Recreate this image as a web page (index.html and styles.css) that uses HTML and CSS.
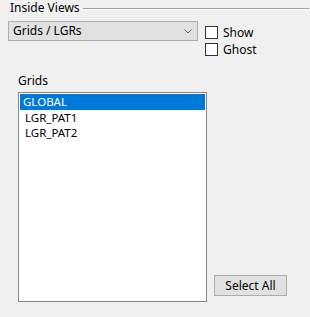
FILE: index.html
```html
<!DOCTYPE html>
<html>
<head>
<meta charset="utf-8">
<link rel="stylesheet" href="styles.css">
</head>
<body>
<div class="panel">
  <div class="group-title">
    <span class="title-text">Inside Views</span>
    <span class="title-line"></span>
  </div>
  <div class="top-row">
    <div class="combo">
      <span class="combo-text">Grids / LGRs</span>
      <svg class="chevron" width="8" height="5" viewBox="0 0 8 5"><path d="M0.5 0.5 L4 4 L7.5 0.5" fill="none" stroke="#606060" stroke-width="1"/></svg>
    </div>
    <div class="checks">
      <label class="check"><span class="box"></span><span>Show</span></label>
      <label class="check"><span class="box"></span><span>Ghost</span></label>
    </div>
  </div>
  <div class="grids-label">Grids</div>
  <div class="bottom-row">
    <div class="list">
      <div class="item selected">GLOBAL</div>
      <div class="item">LGR_PAT1</div>
      <div class="item">LGR_PAT2</div>
    </div>
    <button class="btn">Select All</button>
  </div>
</div>
</body>
</html>
```
FILE: styles.css
```css
html, body {
  margin: 0;
  padding: 0;
  background: #f0f0f0;
}
body {
  font-family: "Noto Sans", "Open Sans", sans-serif;
  font-size: 12px;
  color: #000;
  width: 310px;
  height: 317px;
  overflow: hidden;
}
.panel {
  padding: 0 0 0 8px;
}
.group-title {
  display: flex;
  align-items: center;
  padding-left: 2px;
  height: 16px;
}
.title-text {
  line-height: 16px;
  padding-right: 3px;
}
.title-line {
  width: 226px;
  height: 1px;
  border-top: 1px solid #a0a0a0;
  background: #fff;
  margin-top: 1px;
}
.top-row {
  display: flex;
  margin-top: 5px;
}
.combo {
  box-sizing: border-box;
  width: 190px;
  height: 20px;
  background: #e1e1e1;
  border: 1px solid #adadad;
  display: flex;
  align-items: center;
  justify-content: space-between;
  padding: 0 5px 0 4px;
}
.combo-text {
  line-height: 18px;
}
.chevron {
  display: block;
}
.checks {
  display: flex;
  flex-direction: column;
  gap: 4px;
  margin-left: 7px;
  margin-top: 5px;
}
.check {
  display: flex;
  align-items: center;
  gap: 5px;
  height: 13px;
}
.box {
  box-sizing: border-box;
  width: 13px;
  height: 13px;
  border: 1px solid #333;
  background: #fff;
}
.grids-label {
  margin-top: 17px;
  padding-left: 10px;
  line-height: 16px;
}
.bottom-row {
  display: flex;
  align-items: flex-end;
  margin-top: 3px;
  padding-left: 10px;
}
.list {
  box-sizing: border-box;
  width: 189px;
  height: 210px;
  background: #fff;
  border: 1px solid #828790;
  padding: 1px;
}
.item {
  height: 15px;
  line-height: 15px;
  font-size: 11.5px;
  padding-left: 5px;
  overflow: hidden;
}
.item.selected {
  background: #0078d7;
  color: #fff;
  height: 16px;
  line-height: 16px;
  padding-left: 3px;
}
.btn {
  box-sizing: border-box;
  width: 73px;
  height: 21px;
  margin-left: 7px;
  margin-bottom: 6px;
  background: #e1e1e1;
  border: 1px solid #adadad;
  font-family: inherit;
  font-size: 12px;
  color: #000;
  padding: 0;
}
```
